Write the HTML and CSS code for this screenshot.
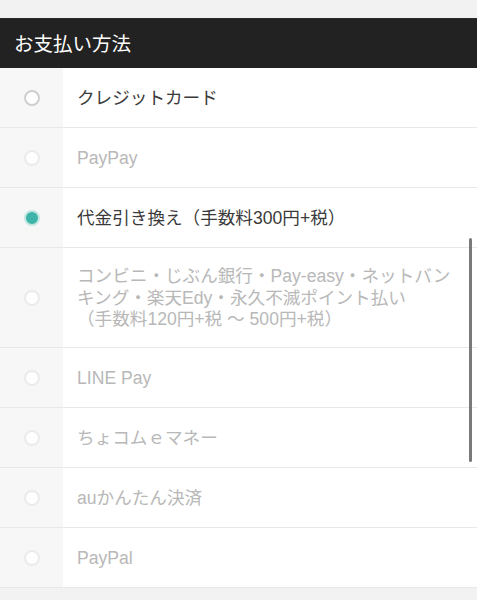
FILE: index.html
```html
<!DOCTYPE html>
<html>
<head lang="ja">
    <meta charset="UTF-8">
    <title>お支払い方法</title>
    <link rel="stylesheet" href="styles.css">
</head>
<body>
<div class="page">
    <div class="title">お支払い方法</div>
    <ul class="payList">
        <li class="item">
            <div class="radioCell"><span class="radio"></span></div>
            <div class="label">クレジットカード</div>
        </li>
        <li class="item off">
            <div class="radioCell"><span class="radio"></span></div>
            <div class="label">PayPay</div>
        </li>
        <li class="item">
            <div class="radioCell"><span class="radio checked"></span></div>
            <div class="label">代金引き換え（手数料300円+税）</div>
        </li>
        <li class="item off tall">
            <div class="radioCell"><span class="radio"></span></div>
            <div class="label">コンビニ・じぶん銀行・Pay-easy・ネットバン<br>キング・楽天Edy・永久不滅ポイント払い<br>（手数料120円+税 〜 500円+税）</div>
        </li>
        <li class="item off">
            <div class="radioCell"><span class="radio"></span></div>
            <div class="label">LINE Pay</div>
        </li>
        <li class="item off">
            <div class="radioCell"><span class="radio"></span></div>
            <div class="label">ちょコムｅマネー</div>
        </li>
        <li class="item off">
            <div class="radioCell"><span class="radio"></span></div>
            <div class="label">auかんたん決済</div>
        </li>
        <li class="item off">
            <div class="radioCell"><span class="radio"></span></div>
            <div class="label">PayPal</div>
        </li>
    </ul>
    <div class="scrollbar"></div>
</div>
</body>
</html>
```

FILE: styles.css
```css
* {
    margin: 0;
    padding: 0;
}

body {
    background: #f2f2f2;
    font-family: "Liberation Sans", "Noto Sans CJK JP", sans-serif;
}

.page {
    position: relative;
    padding-top: 18px;
    height: 582px;
}

.title {
    height: 50px;
    line-height: 50px;
    padding-left: 14px;
    background: #222;
    color: #fff;
    font-size: 19.5px;
    border-top: 1px solid #2c2c2c;
    box-sizing: border-box;
}

.payList {
    list-style: none;
}

.item {
    display: flex;
    height: 60px;
    border-bottom: 1px solid #e8e8e8;
    box-sizing: border-box;
    background: #fff;
}

.item.tall {
    height: 100px;
}

.radioCell {
    width: 63px;
    flex-shrink: 0;
    display: flex;
    align-items: center;
    justify-content: center;
    background: #f7f7f7;
}

.radio {
    width: 12px;
    height: 12px;
    border: 2px solid #cfcfcf;
    border-radius: 50%;
    background: #fff;
}

.off .radio {
    border-color: #ebebeb;
}

.radio.checked {
    background: #3cb5a8;
    border-color: #c4e6e2;
}

.label {
    display: flex;
    align-items: center;
    padding: 2px 0 0 14px;
    font-size: 17.6px;
    line-height: 21.5px;
    color: #3a3a3a;
}

.off .label {
    color: #b8b8b8;
}

.scrollbar {
    position: absolute;
    left: 469px;
    top: 238px;
    width: 3px;
    height: 224px;
    border-radius: 2px;
    background: #7a7a7a;
}
```
